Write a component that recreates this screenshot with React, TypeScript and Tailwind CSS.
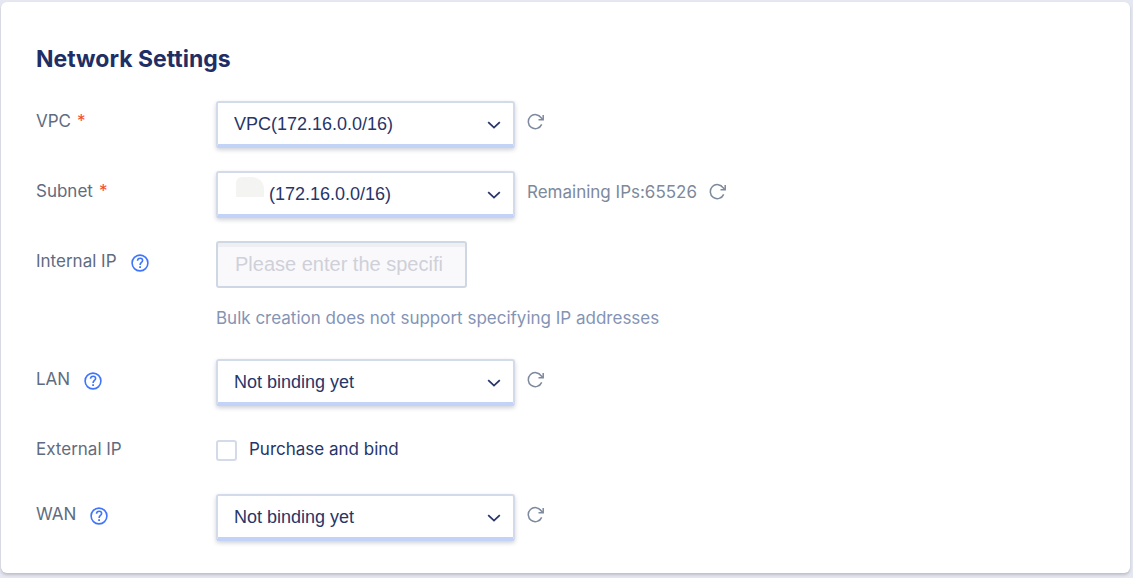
import { useState } from "react";
import type { ReactNode } from "react";

function RefreshIcon() {
  return (
    <svg viewBox="0 0 18 18" className="size-[18px]" fill="none" stroke="currentColor" strokeWidth="1.5" aria-hidden="true">
      <path d="M14.7 11.4A7 7 0 1 1 14.2 4.9L15.6 6.3" />
      <path d="M16.2 2v4.7h-4.7" />
    </svg>
  );
}

function RefreshButton({ label }: { label: string }) {
  return (
    <button type="button" aria-label={label} className="flex h-[42px] items-center text-[#7d899c]">
      <RefreshIcon />
    </button>
  );
}

function HelpButton({ label }: { label: string }) {
  return (
    <button type="button" aria-label={label} className="mt-0.5 text-[#3f74fb]">
      <svg viewBox="0 0 18 18" className="size-[18px]" fill="none" stroke="currentColor" strokeWidth="1.6" aria-hidden="true">
        <circle cx="9" cy="9" r="7.9" />
        <path d="M6.5 6.8C6.6 5.1 7.6 4.2 9.1 4.2s2.5.9 2.5 2.2c0 1.9-2.5 2.2-2.5 4.5" />
        <path d="M9.1 12.3v1.7" strokeWidth="1.8" />
      </svg>
    </button>
  );
}

type RowProps = {
  label: string;
  htmlFor: string;
  required?: boolean;
  help?: boolean;
  children: ReactNode;
};

function Row({ label, htmlFor, required, help, children }: RowProps) {
  return (
    <div className="flex items-start">
      <div className="flex h-[42px] w-[180px] shrink-0 items-center text-[17px] text-[#5f6c80]">
        <label htmlFor={htmlFor}>
          {label}
          {required && <span className="ml-1.5 text-[#f5483b]">*</span>}
        </label>
        {help && <span className="ml-3.5 flex"><HelpButton label={`About ${label}`} /></span>}
      </div>
      {children}
    </div>
  );
}

function SelectBox({ id, option, masked }: { id: string; option: string; masked?: boolean }) {
  return (
    <div className="relative w-[299px] shrink-0">
      <select
        id={id}
        className={`block h-[47px] w-full appearance-none rounded-[3px] border-2 border-b-4 border-[#d3daea] border-b-[#c3d2f7] bg-white pt-0.5 pr-10 font-['Liberation_Sans',sans-serif] text-[18px] text-[#273569] shadow-[0_2px_4px_rgba(40,50,80,0.22)] ${masked ? "pl-[51px]" : "pl-4"}`}
      >
        <option>{option}</option>
      </select>
      {masked && <span className="absolute top-1.5 left-5 h-5 w-7 rounded-t-xl rounded-tl-md bg-[#f4f4f3]" />}
      <svg viewBox="0 0 14 8" className="pointer-events-none absolute top-5 right-3.5 h-2 w-3.5" fill="none" stroke="#273569" strokeWidth="1.8" aria-hidden="true">
        <path d="M1.2 1.2 7 6.6l5.8-5.4" />
      </svg>
    </div>
  );
}

export default function App() {
  const [bind, setBind] = useState(false);
  return (
    <main className="min-h-screen bg-[#e6e8f1] pt-0.5 pr-[3px] pb-1 pl-px font-[Inter,sans-serif]">
      <form className="rounded-md bg-white px-[35px] pt-[41px] pb-8 shadow-[0_2px_3px_rgba(40,45,60,0.22)]">
        <h1 className="mb-[26px] text-[23px] leading-8 font-bold text-[#1f2f66]">Network Settings</h1>
        <div className="flex flex-col gap-[23px]">
          <Row label="VPC" htmlFor="vpc" required>
            <div className="flex gap-3">
              <SelectBox id="vpc" option="VPC(172.16.0.0/16)" />
              <RefreshButton label="Refresh VPC" />
            </div>
          </Row>
          <Row label="Subnet" htmlFor="subnet" required>
            <div className="flex gap-3">
              <SelectBox id="subnet" option="(172.16.0.0/16)" masked />
              <span className="text-[17px] leading-[42px] text-[#7d899c]">Remaining IPs:65526</span>
              <RefreshButton label="Refresh subnet" />
            </div>
          </Row>
          <Row label="Internal IP" htmlFor="internal-ip" help>
            <div>
              <input
                id="internal-ip"
                type="text"
                disabled
                placeholder="Please enter the specifi"
                className="block h-[47px] w-[251px] rounded-[3px] border-2 border-[#d0d7e4] bg-[#f9f9fc] px-[17px] font-['Liberation_Sans',sans-serif] text-[20px] shadow-[inset_0_4px_0_#edeff3] placeholder:text-[#cfd0d8]"
              />
              <p className="mt-[18px] mb-1.5 text-[17px] leading-6 text-[#8494b5]">
                Bulk creation does not support specifying IP addresses
              </p>
            </div>
          </Row>
          <Row label="LAN" htmlFor="lan" help>
            <div className="flex gap-3">
              <SelectBox id="lan" option="Not binding yet" />
              <RefreshButton label="Refresh LAN" />
            </div>
          </Row>
          <Row label="External IP" htmlFor="external-ip">
            <label className="flex h-[42px] items-center gap-3 text-[17px] text-[#273569]">
              <input
                id="external-ip"
                type="checkbox"
                checked={bind}
                onChange={(event) => setBind(event.target.checked)}
                className="size-[21px] appearance-none rounded-[3px] border-2 border-[#d3daea] bg-white checked:bg-[#3f74fb]"
              />
              Purchase and bind
            </label>
          </Row>
          <Row label="WAN" htmlFor="wan" help>
            <div className="flex gap-3">
              <SelectBox id="wan" option="Not binding yet" />
              <RefreshButton label="Refresh WAN" />
            </div>
          </Row>
        </div>
      </form>
    </main>
  );
}
